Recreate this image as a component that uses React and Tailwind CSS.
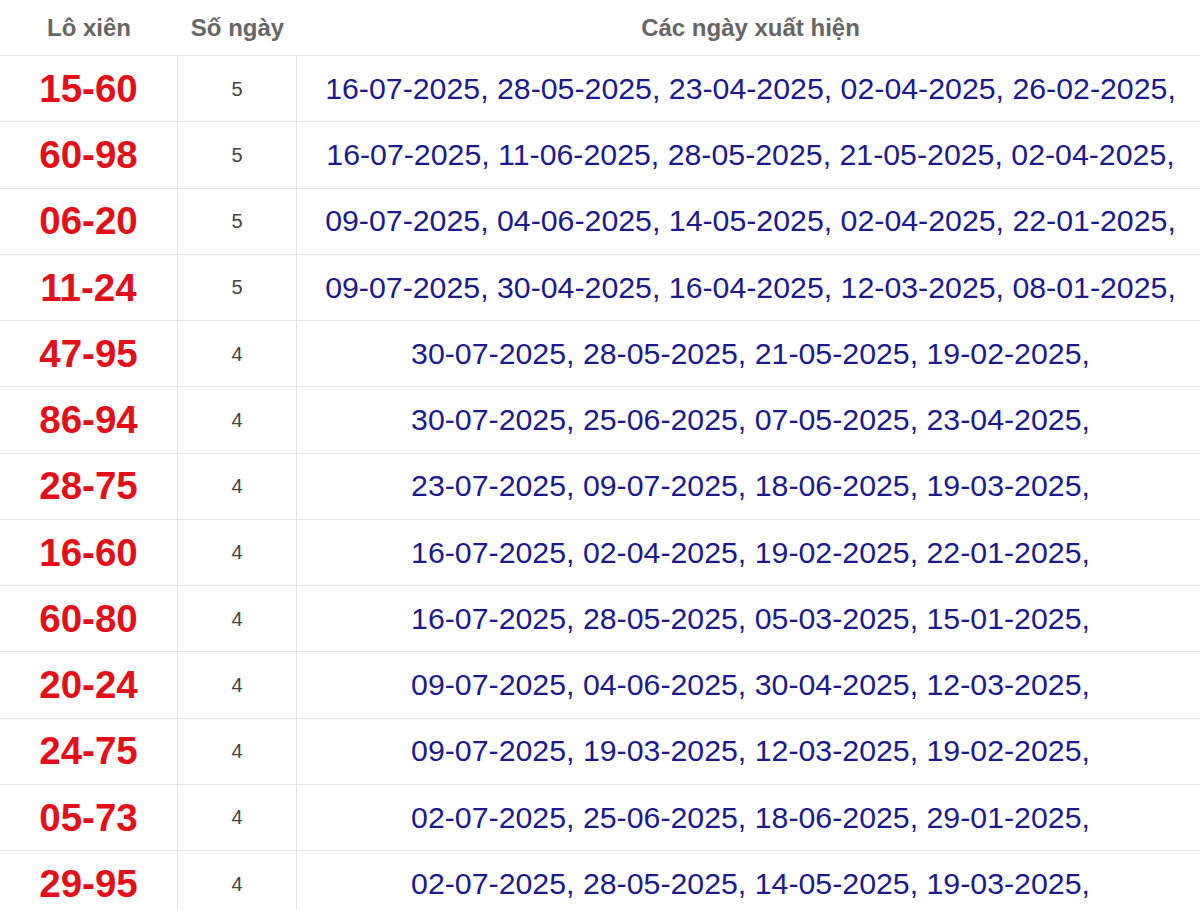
import React from 'react';

const rows = [
  ['15-60', 5, ['16-07-2025', '28-05-2025', '23-04-2025', '02-04-2025', '26-02-2025']],
  ['60-98', 5, ['16-07-2025', '11-06-2025', '28-05-2025', '21-05-2025', '02-04-2025']],
  ['06-20', 5, ['09-07-2025', '04-06-2025', '14-05-2025', '02-04-2025', '22-01-2025']],
  ['11-24', 5, ['09-07-2025', '30-04-2025', '16-04-2025', '12-03-2025', '08-01-2025']],
  ['47-95', 4, ['30-07-2025', '28-05-2025', '21-05-2025', '19-02-2025']],
  ['86-94', 4, ['30-07-2025', '25-06-2025', '07-05-2025', '23-04-2025']],
  ['28-75', 4, ['23-07-2025', '09-07-2025', '18-06-2025', '19-03-2025']],
  ['16-60', 4, ['16-07-2025', '02-04-2025', '19-02-2025', '22-01-2025']],
  ['60-80', 4, ['16-07-2025', '28-05-2025', '05-03-2025', '15-01-2025']],
  ['20-24', 4, ['09-07-2025', '04-06-2025', '30-04-2025', '12-03-2025']],
  ['24-75', 4, ['09-07-2025', '19-03-2025', '12-03-2025', '19-02-2025']],
  ['05-73', 4, ['02-07-2025', '25-06-2025', '18-06-2025', '29-01-2025']],
  ['29-95', 4, ['02-07-2025', '28-05-2025', '14-05-2025', '19-03-2025']],
];

export default function App() {
  return (
    <div className="w-[1200px] h-[910px] overflow-hidden bg-white font-['Liberation_Sans',Arial,sans-serif]">
      {/* header */}
      <div className="grid grid-cols-[178px_119px_1fr] h-[56px] border-b border-[#e4e4e4] items-center text-[24px] font-bold text-[#666]">
        <div className="text-center">Lô xiên</div>
        <div className="text-center">Số ngày</div>
        <div className="text-center pl-1">Các ngày xuất hiện</div>
      </div>

      {rows.map(([pair, count, dates]) => (
        <div
          key={pair}
          className="grid grid-cols-[178px_119px_1fr] h-[66.25px] border-b border-[#e4e4e4]"
        >
          <div className="flex items-center justify-center border-r border-[#e4e4e4] text-[38.5px] font-bold text-[#e3101a]">
            {pair}
          </div>
          <div className="flex items-center justify-center border-r border-[#e4e4e4] text-[20px] text-[#444]">
            {count}
          </div>
          <div className="flex items-center justify-center pl-1 text-[30.3px] text-[#1c1a8c] whitespace-nowrap">
            {dates.map((d) => d + ',').join(' ')}
          </div>
        </div>
      ))}
    </div>
  );
}
